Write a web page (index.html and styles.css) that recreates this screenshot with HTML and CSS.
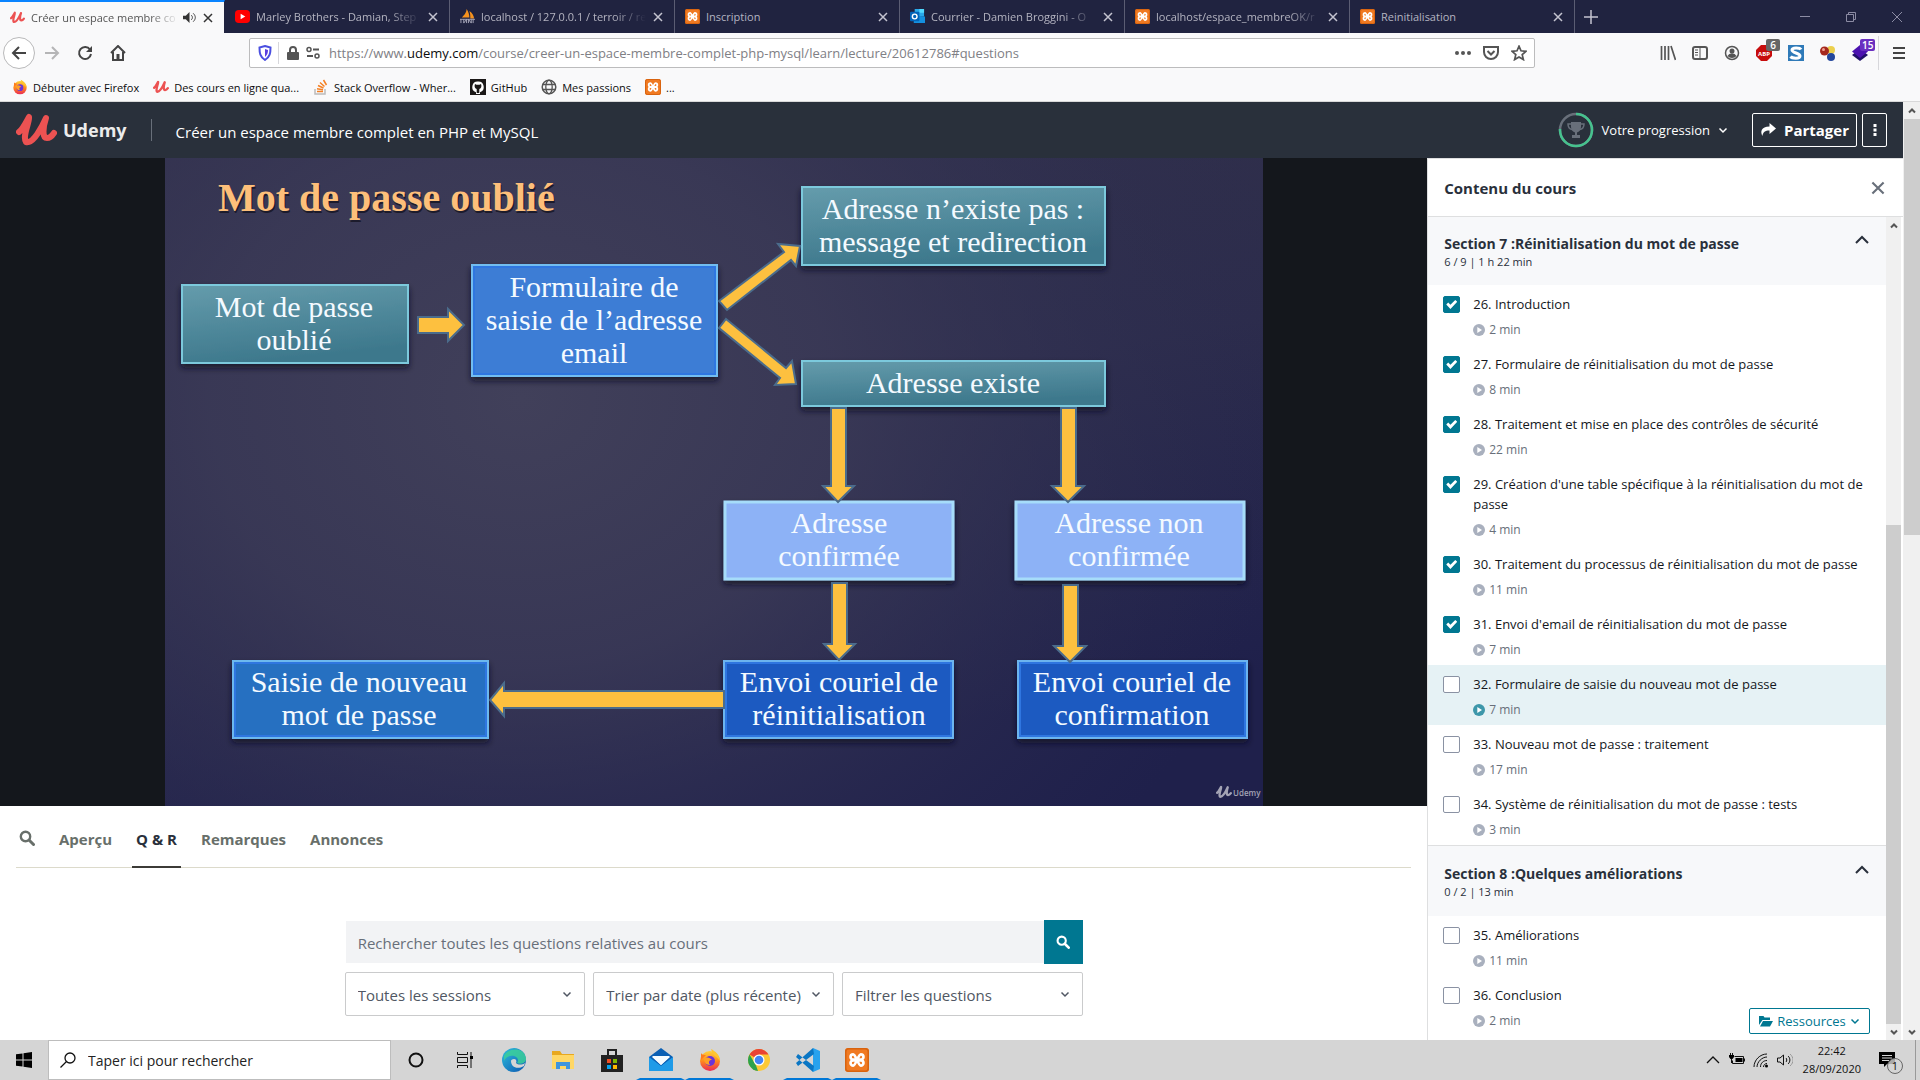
FILE: index.html
```html
<!DOCTYPE html>
<html lang="fr">
<head>
<meta charset="utf-8">
<meta name="viewport" content="width=device-width, initial-scale=1">
<title>Créer un espace membre complet en PHP et MySQL</title>
<link rel="stylesheet" href="styles.css">
</head>
<body>
<svg class="defs" aria-hidden="true">
  <defs>
    <linearGradient id="ffg" x1="0" y1="0" x2="0" y2="1"><stop offset="0" stop-color="#ffd23a"/><stop offset=".5" stop-color="#ff8a1e"/><stop offset="1" stop-color="#ea2a55"/></linearGradient>
    <linearGradient id="edgeg" x1="0" y1="0" x2="1" y2="1"><stop offset="0" stop-color="#2fc0dd"/><stop offset="1" stop-color="#0b55b0"/></linearGradient>
  </defs>
  <symbol id="udemy" viewBox="0 0 41 34"><path d="M3 19C7 16 10 9 13 4C14 9 6 23 10 29C17 31 26 14 30 5C27 14 26 25 31 25C34 25 36 23 38 20" fill="none" stroke="currentColor" stroke-width="6" stroke-linecap="round" stroke-linejoin="round"/></symbol>
  <symbol id="xampp" viewBox="0 0 16 16"><rect width="16" height="16" rx="2" fill="#f07a22"/><rect x=".5" y=".5" width="15" height="15" rx="2" fill="none" stroke="#d8630f"/><path d="M5.500 4.200a1.800 1.800 0 1 0 0 3.600h5a1.800 1.800 0 1 0 0-3.600C9 4.200 7 11.800 5.500 11.800a1.800 1.800 0 1 1 0-3.600h5a1.800 1.800 0 1 1 0 3.600C9 11.800 7 4.200 5.500 4.200z" fill="none" stroke="#fff" stroke-width="1.800"/></symbol>
  <symbol id="firefox" viewBox="0 0 24 24"><circle cx="12" cy="13" r="10" fill="url(#ffg)"/><path d="M13 1c4 2 9 6 9 12-3-5-7-4-9-12z" fill="#ffc62e"/><path d="M3 5c1 2 3 2 5 2l-5 5z" fill="#ff7a1c"/><circle cx="12" cy="13" r="5" fill="#6a34d8"/><path d="M6 11c3-3 6-1 8 1-3 0-4 2-2 5-4 0-6-3-6-6z" fill="#ffa025"/></symbol>
  <symbol id="close" viewBox="0 0 10 10"><path d="M1 1l8 8M9 1L1 9" stroke="currentColor" stroke-width="1.500" fill="none"/></symbol>
  <symbol id="down" viewBox="0 0 10 10"><path d="M1.500 3.500L5 7l3.500-3.500" stroke="currentColor" stroke-width="1.500" fill="none"/></symbol>
  <symbol id="up" viewBox="0 0 14 10"><path d="M1 8l6-6 6 6" stroke="currentColor" stroke-width="2" fill="none"/></symbol>
  <symbol id="play" viewBox="0 0 12 12"><circle cx="6" cy="6" r="6" fill="currentColor"/><path d="M4.300 3v6l4.700-3z" fill="#fff"/></symbol>
  <symbol id="search" viewBox="0 0 16 16"><circle cx="6.500" cy="6.500" r="4.700" stroke="currentColor" stroke-width="2.400" fill="none"/><path d="M10 10l4.500 4.500" stroke="currentColor" stroke-width="3" stroke-linecap="round"/></symbol>
  <symbol id="sup" viewBox="0 0 8 8"><path d="M1 5.500l3-3 3 3" stroke="currentColor" stroke-width="2" fill="none"/></symbol>
  <symbol id="sdown" viewBox="0 0 8 8"><path d="M1 2.500l3 3 3-3" stroke="currentColor" stroke-width="2" fill="none"/></symbol>
</svg>

<div class="desktop">
  <header class="browser">
    <div class="tabs">
      <div class="tab tab-active"><svg class="fav red"><use href="#udemy"/></svg><span class="tab-title fade">Créer un espace membre co</span><svg class="sound" viewBox="0 0 14 14"><path d="M0 5h3l4-4v12L3 9H0z" fill="#333"/><path d="M9 4.500c1.500 1.500 1.500 3.500 0 5M11 2.500c3 3 3 6 0 9" stroke="#333" fill="none"/></svg><button class="tab-close" aria-label="Fermer"><svg><use href="#close"/></svg></button></div>
      <div class="tab"><svg class="fav" viewBox="0 0 16 16"><rect y="1" width="16" height="14" rx="4" fill="#f00"/><path d="M6 5v6l5-3z" fill="#fff"/></svg><span class="tab-title fade">Marley Brothers - Damian, Step</span><button class="tab-close" aria-label="Fermer"><svg><use href="#close"/></svg></button></div>
      <div class="tab"><svg class="fav" viewBox="0 0 16 16"><path d="M7 0c2 3 3 6 3 9H2c2-2 5-5 5-9zM10 2c3 2 5 5 5 8h-4c0-3 0-5-1-8z" fill="#f5921e"/><path d="M0 11h16M1 11v4M4 11v4l3-4v4M9 15v-4l3 4v-4M14 15v-4" stroke="#a9a9bb" fill="none"/></svg><span class="tab-title fade">localhost / 127.0.0.1 / terroir / re</span><button class="tab-close" aria-label="Fermer"><svg><use href="#close"/></svg></button></div>
      <div class="tab"><svg class="fav"><use href="#xampp"/></svg><span class="tab-title">Inscription</span><button class="tab-close" aria-label="Fermer"><svg><use href="#close"/></svg></button></div>
      <div class="tab"><svg class="fav" viewBox="0 0 16 16"><path d="M5 0h10v8H5z" fill="#28a8ea"/><path d="M10 0h5v4h-5z" fill="#50d9ff"/><path d="M4 7l12 1v7H4z" fill="#1490df"/><rect y="3" width="10" height="10" rx="1" fill="#0364b8"/><circle cx="5" cy="8" r="2.500" fill="none" stroke="#fff" stroke-width="1.500"/></svg><span class="tab-title fade">Courrier - Damien Broggini - O</span><button class="tab-close" aria-label="Fermer"><svg><use href="#close"/></svg></button></div>
      <div class="tab"><svg class="fav"><use href="#xampp"/></svg><span class="tab-title fade">localhost/espace_membreOK/r</span><button class="tab-close" aria-label="Fermer"><svg><use href="#close"/></svg></button></div>
      <div class="tab"><svg class="fav"><use href="#xampp"/></svg><span class="tab-title">Reinitialisation</span><button class="tab-close" aria-label="Fermer"><svg><use href="#close"/></svg></button></div>
      <button class="new-tab" aria-label="Nouvel onglet"><svg viewBox="0 0 14 14"><path d="M7 0v14M0 7h14" stroke="#c4c4d0" stroke-width="1.500"/></svg></button>
      <div class="window-buttons">
        <button aria-label="Réduire"><svg viewBox="0 0 10 10"><path d="M0 4.500h10" stroke="#8c8ca4"/></svg></button>
        <button aria-label="Restaurer"><svg viewBox="0 0 10 10"><path d="M.5 2.500h7v7h-7zM2.500 2.500v-2h7v7h-2" stroke="#8c8ca4" fill="none"/></svg></button>
        <button aria-label="Fermer la fenêtre"><svg viewBox="0 0 10 10"><path d="M0 0l10 10M10 0L0 10" stroke="#8c8ca4"/></svg></button>
      </div>
    </div>

    <div class="navbar">
      <button class="nav-btn nav-back" aria-label="Précédent"><svg viewBox="0 0 16 16"><path d="M15 8H2M8 2L2 8l6 6" fill="none" stroke="#444" stroke-width="2"/></svg></button>
      <button class="nav-btn" aria-label="Suivant"><svg viewBox="0 0 16 16"><path d="M1 8h13M8 2l6 6-6 6" fill="none" stroke="#b5b5b6" stroke-width="2"/></svg></button>
      <button class="nav-btn" aria-label="Actualiser"><svg viewBox="0 0 16 16"><path d="M13 4.500A6 6 0 1 0 14 9" fill="none" stroke="#444" stroke-width="2"/><path d="M15 1v6H9z" fill="#444"/></svg></button>
      <button class="nav-btn" aria-label="Accueil"><svg viewBox="0 0 16 16"><path d="M1 8l7-7 7 7M3 7v8h10V7" fill="none" stroke="#444" stroke-width="2"/><path d="M6.500 9h3v6h-3z" fill="#444"/></svg></button>
      <div class="urlbar">
        <svg class="i16" viewBox="0 0 16 16"><path d="M8 1l5.500 1.500C13.500 8 13 12 8 15 3 12 2.500 8 2.500 2.500z" fill="#fff" stroke="#4a4fe0" stroke-width="2"/><path d="M8 4v8c2-2 3-4 3-7z" fill="#5a3fe0"/></svg>
        <span class="url-rule"></span>
        <svg class="i16" viewBox="0 0 16 16"><rect x="2" y="7" width="12" height="8" rx="1" fill="#555"/><path d="M5 8V5a3 3 0 0 1 6 0v3" fill="none" stroke="#555" stroke-width="2"/></svg>
        <svg class="i16" viewBox="0 0 16 16"><circle cx="4" cy="4.500" r="2" fill="none" stroke="#555" stroke-width="1.500"/><path d="M8 4.500h6M2 11h6" stroke="#555" stroke-width="2"/><circle cx="12" cy="11" r="2" fill="none" stroke="#555" stroke-width="1.500"/></svg>
        <a class="url" href="#questions">https://www.<b>udemy.com</b>/course/creer-un-espace-membre-complet-php-mysql/learn/lecture/20612786#questions</a>
        <div class="url-actions">
          <svg class="i16" viewBox="0 0 16 16"><circle cx="2" cy="8" r="2" fill="#555"/><circle cx="8" cy="8" r="2" fill="#555"/><circle cx="14" cy="8" r="2" fill="#555"/></svg>
          <svg class="i16" viewBox="0 0 16 16"><path d="M1 2h14v5a7 7 0 0 1-14 0z" fill="none" stroke="#555" stroke-width="2"/><path d="M4.500 6L8 9.500 11.500 6" fill="none" stroke="#555" stroke-width="2"/></svg>
          <svg class="i16" viewBox="0 0 16 16"><path d="M8 1.200l2 4.600 5 .5-3.800 3.300 1.200 5L8 12l-4.400 2.600 1.200-5L1 6.300l5-.5z" fill="none" stroke="#555" stroke-width="1.700"/></svg>
        </div>
      </div>
      <div class="toolbar">
        <button aria-label="Bibliothèque"><svg class="i16" viewBox="0 0 16 16"><path d="M1.500 1v14M5 1v14M8.500 1v14M11 1l4.500 14" stroke="#555" stroke-width="1.700"/></svg></button>
        <button aria-label="Panneaux"><svg class="i16" viewBox="0 0 16 16"><rect x="1" y="2" width="14" height="12" rx="2" fill="none" stroke="#555" stroke-width="2"/><path d="M8 2v12M3 5h3M3 7.500h3M3 10h3" stroke="#555"/></svg></button>
        <button aria-label="Compte"><svg class="i16" viewBox="0 0 16 16"><circle cx="8" cy="8" r="6.500" fill="none" stroke="#555" stroke-width="1.500"/><circle cx="8" cy="6" r="2.500" fill="#555"/><path d="M3.500 11a5 5 0 0 1 9 0A6 6 0 0 1 3.500 11z" fill="#555"/></svg></button>
        <button aria-label="Adblock Plus"><svg class="i16" viewBox="0 0 16 16"><path d="M5 0h6l5 5v6l-5 5H5l-5-5V5z" fill="#c70d0d"/><text x="8" y="11" text-anchor="middle" class="abp">ABP</text></svg><span class="badge badge-grey">6</span></button>
        <button aria-label="Extension S"><svg class="i16" viewBox="0 0 16 16"><rect width="16" height="16" fill="#2f7ab8"/><path d="M13 4.500C12 2.500 4 2 4 5s8 3 8 6-8 2.500-9.500.5" stroke="#fff" stroke-width="3" fill="none"/></svg></button>
        <button aria-label="Extension couleurs"><svg class="i16" viewBox="0 0 16 16"><circle cx="11" cy="5" r="4" fill="#ecd04e"/><circle cx="4.500" cy="6" r="4.500" fill="#a5281e"/><circle cx="11" cy="12" r="4" fill="#24479c"/><circle cx="3.500" cy="4.500" r="1.500" fill="#f0a090"/></svg></button>
        <button aria-label="Extension couches"><svg class="i16" viewBox="0 0 16 16"><path d="M8 4l8 6-8 6-8-6z" fill="#20106a"/><path d="M8 0l8 6.500L8 13 0 6.500z" fill="#4b12b0"/></svg><span class="badge badge-purple">15</span></button>
        <span class="toolbar-rule"></span>
        <button class="menu-btn" aria-label="Menu"><svg viewBox="0 0 14 14"><path d="M1 2h12M1 7h12M1 12h12" stroke="#444" stroke-width="2"/></svg></button>
      </div>
    </div>

    <nav class="bookmarks">
      <a href="#"><svg class="i16"><use href="#firefox"/></svg>Débuter avec Firefox</a>
      <a href="#"><svg class="i16 red"><use href="#udemy"/></svg>Des cours en ligne qua...</a>
      <a href="#"><svg class="i16" viewBox="0 0 16 16"><path d="M2 10v5h10v-5" fill="none" stroke="#bcbbbb" stroke-width="1.500"/><path d="M4 12.500h6M4 9.800l6 1M5 6.500l5.500 2.500M7 3.500l4.500 4M10.500 1l3 5" stroke="#f48024" stroke-width="1.500"/></svg>Stack Overflow - Wher...</a>
      <a href="#"><svg class="i16" viewBox="0 0 16 16"><rect width="16" height="16" fill="#1b1817"/><path d="M8 2.500a5.500 5.500 0 0 0-2 10.700V15h4v-1.800A5.500 5.500 0 0 0 8 2.500z" fill="#fff"/><path d="M5 5l1.500.7h3L11 5c.8 2 .5 4.500-1.700 5v4H6.700v-4C4.500 9.500 4.200 7 5 5z" fill="#1b1817"/></svg>GitHub</a>
      <a href="#"><svg class="i16" viewBox="0 0 16 16"><circle cx="8" cy="8" r="6.800" fill="none" stroke="#555" stroke-width="1.500"/><ellipse cx="8" cy="8" rx="3.200" ry="6.800" fill="none" stroke="#555" stroke-width="1.300"/><path d="M1.500 5.500h13M1.500 10.500h13" stroke="#555" stroke-width="1.300"/></svg>Mes passions</a>
      <a href="#"><svg class="i16"><use href="#xampp"/></svg>...</a>
    </nav>
  </header>

  <div class="viewport">
    <div class="page">
      <header class="course-header">
        <a class="logo" href="#"><svg class="red"><use href="#udemy"/></svg>Udemy</a>
        <h1>Créer un espace membre complet en PHP et MySQL</h1>
        <button class="progress"><svg class="ring" viewBox="0 0 36 36"><circle cx="18" cy="18" r="16" fill="none" stroke="#686f7a" stroke-width="2.500"/><circle cx="18" cy="18" r="16" fill="none" stroke="#46c28e" stroke-width="2.500" stroke-dasharray="76 101" transform="rotate(-90 18 18)"/><path d="M13 10h10v5c0 3-2 5-4 5.500V23h3v3h-8v-3h3v-2.500c-2-.5-4-2.500-4-5.500z" fill="#686f7a"/><path d="M13 12h-3c0 4 1.500 5 4 5.500M23 12h3c0 4-1.500 5-4 5.500" stroke="#686f7a" stroke-width="1.500" fill="none"/></svg>Votre progression<svg class="chev"><use href="#down"/></svg></button>
        <button class="outline share"><svg viewBox="0 0 16 14"><path d="M9.500 0L16 5.500 9.500 11V7.500C5 7.500 3 9 2.500 13 0 9 1 3.500 9.500 3.500z" fill="#fff"/></svg>Partager</button>
        <button class="outline more" aria-label="Plus"><svg viewBox="0 0 4 14"><path d="M.5 1h3v3h-3zM.5 5.500h3v3h-3zM.5 10h3v3h-3z" fill="#fff"/></svg></button>
      </header>

      <div class="course">
        <main class="main">
          <div class="video">
            <svg class="slide" viewBox="164 158 1098 648" role="img" aria-label="Mot de passe oublié">
              <defs>
                <radialGradient id="bg" gradientUnits="userSpaceOnUse" cx="520" cy="400" r="780" gradientTransform="translate(0 60) scale(1 .85)"><stop offset="0" stop-color="#41405a"/><stop offset=".4" stop-color="#3b3a57" stop-opacity=".85"/><stop offset="1" stop-color="#2b2c50" stop-opacity="0"/></radialGradient>
                <linearGradient id="base" x1="0" y1="0" x2=".3" y2="1"><stop offset="0" stop-color="#32314b"/><stop offset=".5" stop-color="#2c2c4c"/><stop offset="1" stop-color="#1f204b"/></linearGradient>
                <linearGradient id="teal" x1="0" y1="0" x2=".3" y2="1"><stop offset="0" stop-color="#659cac"/><stop offset="1" stop-color="#3d788c"/></linearGradient>
                <filter id="sh" x="-10%" y="-20%" width="120%" height="150%"><feDropShadow dx="0" dy="4" stdDeviation="3" flood-color="#0c0c20" flood-opacity=".75"/></filter>
              </defs>
              <rect x="164" y="158" width="1098" height="648" fill="url(#base)"/>
              <rect x="164" y="158" width="1098" height="648" fill="url(#bg)"/>
              <g filter="url(#sh)">
                <g fill="url(#teal)" stroke="#7cc9dc" stroke-width="2">
                  <rect x="181" y="285" width="226" height="78"/>
                  <rect x="801" y="187" width="303" height="78"/>
                  <rect x="801" y="361" width="303" height="45"/>
                </g>
                <rect x="471" y="265" width="245" height="111" fill="#3c7dd5" stroke="#72bdf0" stroke-width="2"/>
                <g fill="#8db2f6" stroke="#a6dcfa" stroke-width="3">
                  <rect x="724" y="502" width="228" height="77"/>
                  <rect x="1015" y="502" width="228" height="77"/>
                </g>
                <g fill="#1f5ac1" stroke="#6cb4ee" stroke-width="2">
                  <rect x="723" y="661" width="229" height="77"/>
                  <rect x="1017" y="661" width="229" height="77"/>
                </g>
                <rect x="232" y="661" width="255" height="77" fill="#276fc1" stroke="#6cb8ee" stroke-width="2"/>
              </g>
              <g fill="none" stroke="#2f76e0" stroke-width="2">
                <rect x="473" y="267" width="241" height="107"/>
                <rect x="725" y="663" width="225" height="73"/>
                <rect x="1019" y="663" width="225" height="73"/>
                <rect x="234" y="663" width="251" height="73"/>
              </g>
              <g fill="#fdc03f" stroke="#4b6c8c" stroke-width="2">
                <path d="M417 317h30v-8l16 16-16 16v-8h-30z"/>
                <path d="M718 301l65-49-6-8 22 2-4 20-5-6-64 50z"/>
                <path d="M725 319l60 49 6-7 4 23-21 1 5-7-61-50z"/>
                <path d="M830 408h15v78h8l-16 16-15-16h8z"/>
                <path d="M1060 408h15v78h8l-16 16-16-16h9z"/>
                <path d="M831 583h15v61h8l-16 16-15-16h8z"/>
                <path d="M1062 585h15v61h8l-16 16-16-16h9z"/>
                <path d="M723 691H503v-8l-14 17 14 16v-8h220z"/>
              </g>
              <text class="slide-title slide-title-shade" x="218" y="213">Mot de passe oublié</text>
              <text class="slide-title" x="217" y="211">Mot de passe oublié</text>
              <g class="slide-text">
                <text x="293" y="317">Mot de passe</text><text x="293" y="350">oublié</text>
                <text x="593" y="297">Formulaire de</text><text x="593" y="330">saisie de l’adresse</text><text x="593" y="363">email</text>
                <text x="952" y="219">Adresse n’existe pas :</text><text x="952" y="252">message et redirection</text>
                <text x="952" y="393">Adresse existe</text>
                <text x="838" y="533">Adresse</text><text x="838" y="566">confirmée</text>
                <text x="1128" y="533">Adresse non</text><text x="1128" y="566">confirmée</text>
                <text x="838" y="692">Envoi couriel de</text><text x="838" y="725">réinitialisation</text>
                <text x="1131" y="692">Envoi couriel de</text><text x="1131" y="725">confirmation</text>
                <text x="358" y="692">Saisie de nouveau</text><text x="358" y="725">mot de passe</text>
              </g>
              <svg x="1215" y="785" width="16" height="14" color="#a3a3b4"><use href="#udemy"/></svg>
              <text class="watermark" x="1232" y="796">Udemy</text>
            </svg>
          </div>

          <nav class="course-tabs">
            <button class="tab-search" aria-label="Rechercher"><svg class="i16"><use href="#search"/></svg></button>
            <a href="#">Aperçu</a>
            <a href="#" class="on">Q &amp; R</a>
            <a href="#">Remarques</a>
            <a href="#">Annonces</a>
          </nav>

          <form class="questions">
            <div class="q-search">
              <input type="text" aria-label="Rechercher" placeholder="Rechercher toutes les questions relatives au cours">
              <button type="button" aria-label="Rechercher"><svg><use href="#search"/></svg></button>
            </div>
            <div class="q-filters">
              <label class="pick"><select aria-label="Sessions"><option>Toutes les sessions</option></select><svg class="chev"><use href="#down"/></svg></label>
              <label class="pick"><select aria-label="Tri"><option>Trier par date (plus récente)</option></select><svg class="chev"><use href="#down"/></svg></label>
              <label class="pick"><select aria-label="Filtre"><option>Filtrer les questions</option></select><svg class="chev"><use href="#down"/></svg></label>
            </div>
          </form>
        </main>

        <aside class="sidebar">
          <div class="side-head"><h2>Contenu du cours</h2><button aria-label="Fermer"><svg><use href="#close"/></svg></button></div>
          <div class="side-body">
            <div class="side-list">
              <section>
                <div class="sec-head"><div><h3>Section 7 :Réinitialisation du mot de passe</h3><p>6 / 9 | 1 h 22 min</p></div><svg><use href="#up"/></svg></div>
                <ul>
                  <li><input type="checkbox" id="l26" checked><div><label for="l26">26. Introduction</label><p><svg><use href="#play"/></svg>2 min</p></div></li>
                  <li><input type="checkbox" id="l27" checked><div><label for="l27">27. Formulaire de réinitialisation du mot de passe</label><p><svg><use href="#play"/></svg>8 min</p></div></li>
                  <li><input type="checkbox" id="l28" checked><div><label for="l28">28. Traitement et mise en place des contrôles de sécurité</label><p><svg><use href="#play"/></svg>22 min</p></div></li>
                  <li><input type="checkbox" id="l29" checked><div><label for="l29">29. Création d'une table spécifique à la réinitialisation du mot de passe</label><p><svg><use href="#play"/></svg>4 min</p></div></li>
                  <li><input type="checkbox" id="l30" checked><div><label for="l30">30. Traitement du processus de réinitialisation du mot de passe</label><p><svg><use href="#play"/></svg>11 min</p></div></li>
                  <li><input type="checkbox" id="l31" checked><div><label for="l31">31. Envoi d'email de réinitialisation du mot de passe</label><p><svg><use href="#play"/></svg>7 min</p></div></li>
                  <li class="current"><input type="checkbox" id="l32"><div><label for="l32">32. Formulaire de saisie du nouveau mot de passe</label><p><svg><use href="#play"/></svg>7 min</p></div></li>
                  <li><input type="checkbox" id="l33"><div><label for="l33">33. Nouveau mot de passe : traitement</label><p><svg><use href="#play"/></svg>17 min</p></div></li>
                  <li><input type="checkbox" id="l34"><div><label for="l34">34. Système de réinitialisation du mot de passe : tests</label><p><svg><use href="#play"/></svg>3 min</p></div></li>
                </ul>
              </section>
              <section>
                <div class="sec-head"><div><h3>Section 8 :Quelques améliorations</h3><p>0 / 2 | 13 min</p></div><svg><use href="#up"/></svg></div>
                <ul>
                  <li><input type="checkbox" id="l35"><div><label for="l35">35. Améliorations</label><p><svg><use href="#play"/></svg>11 min</p></div></li>
                  <li><input type="checkbox" id="l36"><div><label for="l36">36. Conclusion</label><p><svg><use href="#play"/></svg>2 min</p></div><button class="resources"><svg class="folder" viewBox="0 0 14 12"><path d="M0 10V1h4.500l1 1.500H11V5H3.500z" fill="currentColor"/><path d="M4 6h10l-3 5.500H1z" fill="currentColor"/></svg>Ressources<svg class="chev"><use href="#down"/></svg></button></li>
                </ul>
              </section>
            </div>
            <div class="scrollbar side-scroll" aria-hidden="true"><svg><use href="#sup"/></svg><i></i><b></b><svg><use href="#sdown"/></svg></div>
          </div>
        </aside>
      </div>
    </div>
    <div class="scrollbar page-scroll" aria-hidden="true"><svg><use href="#sup"/></svg><b></b><i></i><svg><use href="#sdown"/></svg></div>
  </div>

  <footer class="taskbar">
    <button class="start" aria-label="Démarrer"><svg class="i16" viewBox="0 0 16 16"><path d="M0 2.300L6.500 1.400v6.100H0zM7.500 1.200L16 0v7.500H7.500zM0 8.500h6.500v6.100L0 13.700zM7.500 8.500H16V16l-8.500-1.200z"/></svg></button>
    <div class="task-search"><svg class="i16" viewBox="0 0 16 16"><circle cx="10" cy="6" r="5" fill="none" stroke="#111" stroke-width="1.300"/><path d="M6.500 9.500L.5 15.500" stroke="#111" stroke-width="1.300"/></svg><input type="text" aria-label="Recherche Windows" placeholder="Taper ici pour rechercher"></div>
    <div class="apps">
      <button aria-label="Cortana"><svg class="i16" viewBox="0 0 16 16"><circle cx="8" cy="8" r="6.500" fill="none" stroke="#111" stroke-width="2"/></svg></button>
      <button aria-label="Vue des tâches"><svg class="i16" viewBox="0 0 16 16"><path d="M.5 0v2.500h10V0M.5 5.500h10v5H.5zM.5 16v-2.500h10V16M14 0v16" fill="none" stroke="#111"/><path d="M13 4h3v3h-3z"/></svg></button>
      <button aria-label="Edge"><svg viewBox="0 0 24 24"><circle cx="12" cy="12" r="12" fill="url(#edgeg)"/><path d="M2 8C5 0 22-2 24 10c1 5-5 7-9 5 2-2 1-6-3-7-5-1-9 2-10 5z" fill="#3ccf9a" opacity=".85"/><path d="M9 13c0 6 6 9 13 5l1-3c-3 2-7 2-9 0 1-2 0-4-2-4s-3 1-3 2z" fill="#d5d5d5"/></svg></button>
      <button aria-label="Explorateur"><svg viewBox="0 0 24 24"><path d="M1 3h8l2 3h12v5H1z" fill="#e8a81f"/><path d="M1 7h22v14H1z" fill="#ffd765"/><path d="M5 21v-7h14v7h-4v-3H9v3z" fill="#3f95dd"/></svg></button>
      <button aria-label="Store"><svg viewBox="0 0 24 24"><path d="M1 7h22v17H1z" fill="#222"/><path d="M8 7V2h8v5" fill="none" stroke="#222" stroke-width="2"/><path d="M7 11h4v4H7z" fill="#f04e23"/><path d="M13 11h4v4h-4z" fill="#7eb900"/><path d="M7 17h4v4H7z" fill="#00a3ee"/><path d="M13 17h4v4h-4z" fill="#feb800"/></svg></button>
      <button class="open" aria-label="Courrier"><svg viewBox="0 0 24 24"><path d="M12 0l12 9v14H0V9z" fill="#0a5fb4"/><path d="M3 8h18l-9 9z" fill="#f5fbff"/><path d="M0 9l12 9 12-9v14H0z" fill="#1f9be8"/><path d="M3 9l9 8 9-8z" fill="#f5fbff"/></svg></button>
      <button class="open" aria-label="Firefox"><svg><use href="#firefox"/></svg></button>
      <button aria-label="Chrome"><svg viewBox="0 0 24 24"><circle cx="12" cy="12" r="11" fill="#fcc934"/><path d="M12 12L2.500 6.500a11 11 0 0 1 19 0H12z" fill="#ea4335"/><path d="M2.500 6.500L9 17.500 11 23A11 11 0 0 1 2.500 6.500z" fill="#2ca24d"/><circle cx="12" cy="12" r="5.500" fill="#fff"/><circle cx="12" cy="12" r="4.300" fill="#4285f4"/></svg></button>
      <button class="open" aria-label="Visual Studio Code"><svg viewBox="0 0 24 24"><path d="M17 0l7 3v18l-7 3z" fill="#27a2ee"/><path d="M17 0L0 15l2 3L18 6zM17 24L0 9l2-3 16 12z" fill="#0a76c4"/></svg></button>
      <button class="open" aria-label="XAMPP"><svg><use href="#xampp"/></svg></button>
    </div>
    <div class="tray">
      <svg class="i16" viewBox="0 0 16 16"><path d="M2 11l6-6 6 6" fill="none" stroke="#111" stroke-width="1.300"/></svg>
      <svg class="i16" viewBox="0 0 16 16"><path d="M5.500 4.500h9v7h-11v-3M15.500 6.500v3" fill="none" stroke="#111"/><path d="M6.500 6h7v4h-7z"/><path d="M0 3h5v2L3.500 7h-2L0 5z"/><path d="M1.500 1v2M3.500 1v2M2.500 7v4" stroke="#111"/></svg>
      <svg class="i16" viewBox="0 0 16 16"><path d="M1 15C1 8 7 2 14 2M4 15C4 10 9 5 14 5M7.500 15c0-4 3-6.500 6.500-6.500M10.500 15c0-2 1.500-3.500 3.500-3.500" fill="none" stroke="#111"/><circle cx="13.500" cy="14" r="1.500"/></svg>
      <svg class="i16" viewBox="0 0 16 16"><path d="M.5 6h2.500l3.500-3v10L3 10H.5z" fill="none" stroke="#111"/><path d="M9 6c1 1 1 3 0 4M11 4c2.500 2 2.500 6 0 8" fill="none" stroke="#111"/><path d="M13 2c4 3.500 4 8.500 0 12" fill="none" stroke="#999"/></svg>
      <div class="clock"><span>22:42</span><span>28/09/2020</span></div>
      <div class="notif"><svg viewBox="0 0 16 16"><path d="M0 0h16v12H8l-3 3v-3H0z"/><path d="M3 3.500h10M3 6h10M3 8.500h7" stroke="#d5d5d5"/></svg><span>1</span></div>
    </div>
  </footer>
</div>
</body>
</html>
```
FILE: styles.css
```css
*, *::before, *::after { box-sizing: border-box; }
body { margin: 0; font-family: "Open Sans", "Noto Sans", sans-serif; font-size: 14px; color: #29303b; }
h1, h2, h3, p, ul { margin: 0; padding: 0; }
ul { list-style: none; }
a { color: inherit; text-decoration: none; }
button { font: inherit; color: inherit; background: none; border: 0; padding: 0; display: flex; align-items: center; justify-content: center; }
svg { flex: none; display: block; }
.defs { position: absolute; width: 0; height: 0; }
.i16 { width: 16px; height: 16px; }
.red { color: #ec5252; }
.chev { width: 10px; height: 10px; }

.desktop { display: flex; flex-direction: column; height: 100vh; overflow: hidden; background: #fff; }

/* Browser chrome */
.browser { flex: none; background: #f9f9fa; border-bottom: 1px solid #d8d8d9; font-size: 11px; }
.tabs { display: flex; height: 33px; background: #202340; color: #b4b4c0; }
.tab { flex: 0 1 225px; min-width: 0; display: flex; align-items: center; padding: 0 8px 0 10px; border-right: 1px solid #5b5d73; }
.tab-active { background: #f9f9fa; color: #555; border-top: 2px solid #0a84ff; border-right-color: #202340; }
.fav { width: 15px; height: 15px; margin-right: 6px; }
.tab-title { flex: 1; min-width: 0; white-space: nowrap; }
.fade { -webkit-mask-image: linear-gradient(90deg, #000 80%, transparent); mask-image: linear-gradient(90deg, #000 80%, transparent); }
.sound { width: 13px; height: 13px; margin-left: 4px; }
.tab-close { width: 16px; height: 16px; margin-left: 4px; color: #c4c4d0; }
.tab-active .tab-close { color: #333; }
.tab-close svg { width: 10px; height: 10px; }
.new-tab { width: 32px; }
.new-tab svg { width: 14px; height: 14px; }
.window-buttons { display: flex; margin-left: auto; }
.window-buttons button { width: 46px; }
.window-buttons svg { width: 10px; height: 10px; }

.navbar { display: flex; align-items: center; gap: 1px; height: 40px; padding: 0 3px; }
.nav-btn { width: 32px; height: 32px; }
.nav-back { border: 1px solid #b9b9ba; border-radius: 50%; background: #fff; }
.nav-btn svg { width: 16px; height: 16px; }
.urlbar { flex: 1; min-width: 0; display: flex; align-items: center; gap: 4px; height: 30px; margin: 0 116px 0 114px; padding: 0 7px; background: #fff; border: 1px solid #bcbcbd; border-radius: 2px; }
.url-rule { width: 1px; height: 22px; margin: 0 2px 0 1px; background: #d7d7db; }
.url { flex: 1; min-width: 0; overflow: hidden; white-space: nowrap; margin-left: 4px; font-size: 13px; color: #808085; }
.url b { font-weight: 400; color: #0c0c0d; }
.url-actions { display: flex; gap: 12px; }
.toolbar { display: flex; align-items: center; }
.toolbar button { position: relative; width: 32px; height: 32px; }
.toolbar .menu-btn svg { width: 14px; height: 14px; }
.toolbar .menu-btn { width: 36px; }
.toolbar-rule { width: 1px; height: 34px; margin: 0 2px; background: #d7d7db; }
.abp { font: 700 6px "Open Sans", sans-serif; fill: #fff; }
.badge { position: absolute; top: 2px; left: 18px; min-width: 14px; padding: 0 2px; border-radius: 2px; font-size: 10px; line-height: 12px; font-weight: 600; color: #fff; text-align: center; }
.badge-grey { background: #666; }
.badge-purple { left: 16px; background: #6a2fc0; }

.bookmarks { display: flex; align-items: center; gap: 14px; height: 28px; padding: 0 12px; color: #0c0c0d; }
.bookmarks a { display: flex; align-items: center; gap: 5px; white-space: nowrap; }

/* Page */
.viewport { flex: 1; min-height: 0; display: flex; }
.page { flex: 1; min-width: 0; display: flex; flex-direction: column; }
.course-header { flex: none; display: flex; align-items: center; height: 56px; padding: 0 16px; background: #29303b; color: #fff; }
.logo { display: flex; align-items: center; gap: 6px; padding-right: 24px; margin-right: 24px; border-right: 1px solid #686f7a; font-size: 18px; line-height: 22px; font-weight: 700; color: #ececec; }
.logo svg { width: 41px; height: 34px; margin: -6px 0; }
.course-header h1 { flex: 1; padding-top: 3px; font-size: 15px; font-weight: 400; }
.progress { gap: 8px; font-size: 13px; }
.ring { width: 36px; height: 36px; }
.outline { height: 34px; border: 1px solid #fff; border-radius: 2px; }
.share { gap: 8px; width: 105px; margin: 0 5px 0 24px; font-size: 15px; font-weight: 700; }
.share svg { width: 16px; height: 14px; }
.more { width: 25px; }
.more svg { width: 4px; height: 14px; }

.course { flex: 1; min-height: 0; display: grid; grid-template-columns: 3fr 1fr; }
.main { min-width: 0; overflow: hidden; }
.video { display: flex; justify-content: center; background: #14171c; }
.slide { height: 60vh; aspect-ratio: 1098 / 648; max-width: 100%; }
.slide-title { font: 700 40px "Palatino Linotype", "Liberation Serif", serif; fill: #fdbf7a; }
.slide-title-shade { fill: #1c1b2c; }
.slide-text { font: 400 30px "Palatino Linotype", "Liberation Serif", serif; fill: #f4faff; text-anchor: middle; }
.watermark { font: 600 8px "Open Sans", sans-serif; fill: #a3a3b4; }

.course-tabs { display: flex; gap: 16px; height: 62px; margin: 0 16px; border-bottom: 1px solid #dcdacb; font-size: 15px; font-weight: 700; color: #686f6a; }
.course-tabs a { display: flex; align-items: center; padding: 5px 4px 0; border-bottom: 2px solid transparent; margin-bottom: -1px; }
.course-tabs .on { color: #29303b; border-color: #3c3b37; }
.tab-search { padding: 2px 4px 0 3px; }

.questions { width: 738px; max-width: 100%; margin: 52px auto 0; font-size: 15px; color: #505763; }
.q-search { display: flex; height: 44px; }
.q-search input { flex: 1; min-width: 0; margin: 1px 0 1px 1px; padding: 1px 12px 0; border: 0; background: #f2f3f5; font: inherit; color: inherit; }
.q-search input::placeholder { color: #686f7a; opacity: 1; }
.q-search button { width: 39px; background: #007791; color: #fff; }
.q-search svg { width: 14px; height: 14px; }
.q-filters { display: grid; grid-template-columns: repeat(3, 1fr); gap: 8px; margin-top: 8px; }
.pick { display: grid; align-items: center; }
.pick select, .pick svg { grid-area: 1 / 1; }
.pick select { appearance: none; width: 100%; height: 44px; padding: 1px 12px 0; border: 1px solid #cacbcc; border-radius: 2px; background: #fff; font: inherit; color: inherit; }
.pick svg { justify-self: end; margin-right: 13px; pointer-events: none; }

/* Course content */
.sidebar { display: flex; flex-direction: column; min-height: 0; border-left: 1px solid #dedfe0; border-top: 1px solid #dedfe0; }
.side-head { display: flex; align-items: center; justify-content: space-between; height: 58px; padding: 0 18px 0 16px; border-bottom: 1px solid #dedfe0; }
.side-head h2 { font-size: 15px; font-weight: 700; }
.side-head svg { width: 14px; height: 14px; color: #686f7a; }
.side-body { flex: 1; min-height: 0; display: flex; }
.side-list { flex: 1; min-width: 0; overflow: hidden; }
.sec-head { display: flex; justify-content: space-between; height: 68px; padding: 17px 17px 0 16px; background: #f7f8fa; }
.sec-head h3 { font-size: 14px; line-height: 20px; font-weight: 700; }
.sec-head p { font-size: 11px; line-height: 16px; }
.sec-head svg { width: 14px; height: 10px; margin-top: 1px; }
section + section .sec-head { height: 71px; padding-top: 18px; border-top: 1px solid #dedfe0; }
li { display: flex; padding: 9px 16px 2px 15px; }
li input { appearance: none; flex: none; width: 17px; height: 17px; margin: 2px 13px 0 0; border: 1px solid #8a92a3; border-radius: 2px; background: #fff; display: grid; place-content: center; }
li input:checked { background: #007791; border-color: #007791; }
li input:checked::before { content: ""; width: 11px; height: 9px; background: #fff; clip-path: polygon(0 50%, 18% 28%, 38% 52%, 82% 0, 100% 20%, 38% 100%); }
li > div { flex: 1; min-width: 0; }
li label { display: block; font-size: 13px; line-height: 20px; color: #14171c; }
li p { display: flex; align-items: center; gap: 4px; margin-top: 8px; padding-bottom: 5px; font-size: 12px; line-height: 16px; color: #686f7a; }
li p svg { width: 12px; height: 12px; color: #a9b0be; }
.current { background: #e6f2f5; }
.current p svg { color: #3d97aa; }
.resources { align-self: flex-end; gap: 4px; width: 121px; height: 26px; border: 1px solid #007791; border-radius: 2px; font-size: 13px; color: #007791; }
.folder { width: 14px; height: 12px; }

.scrollbar { flex: none; display: flex; flex-direction: column; align-items: center; width: 17px; padding: 5px 0 4px; background: #f0f0f0; color: #555; }
.scrollbar svg { width: 8px; height: 8px; }
.scrollbar b { align-self: stretch; background: #cdcdcd; }
.scrollbar i { flex: 1; }
.side-scroll { border-right: 2px solid #fff; }
.side-scroll i { flex: 296; margin-top: 4px; }
.side-scroll b { flex: 507; margin-bottom: 4px; }
.page-scroll i { flex: 488; margin-bottom: 4px; }
.page-scroll b { flex: 416; margin: 4px 0 0 1px; }

/* Taskbar */
.taskbar { flex: none; display: flex; height: 40px; background: #d5d5d5; color: #111; }
.start { width: 48px; }
.task-search { display: flex; align-items: center; gap: 12px; width: 343px; padding: 0 11px; background: #fff; border: 1px solid #bdbdbd; }
.task-search input { flex: 1; min-width: 0; padding: 0; border: 0; background: none; font: inherit; }
.task-search input::placeholder { color: #222; opacity: 1; }
.apps { display: flex; }
.apps button { width: 49px; border: solid transparent; border-width: 2px 4px; }
.apps button svg:not(.i16) { width: 24px; height: 24px; }
.apps .open { border-bottom-color: #0078d7; }
.tray { display: flex; align-items: center; gap: 8px; margin-left: auto; padding-right: 20px; margin-right: 4px; border-right: 1px solid #999; }
.clock { display: flex; flex-direction: column; align-items: center; margin: 0 10px 0 2px; font-size: 11px; line-height: 18px; }
.notif { position: relative; }
.notif svg { width: 16px; height: 16px; }
.notif span { position: absolute; left: 8px; top: 6px; width: 16px; height: 16px; border: 1px solid #666; border-radius: 50%; background: #d5d5d5cc; font-size: 11px; line-height: 14px; text-align: center; }
```
